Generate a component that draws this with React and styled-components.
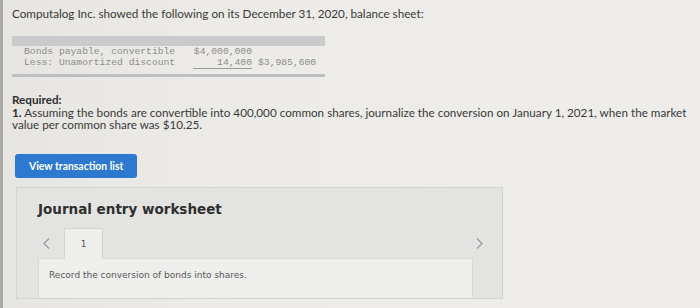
import styled, { createGlobalStyle } from 'styled-components';

const GlobalStyle = createGlobalStyle`
  html, body {
    margin: 0;
    padding: 0;
    background: #ebeae6;
  }
`;

const Page = styled.div`
  position: relative;
  min-height: 308px;
  box-sizing: border-box;
  padding: 5px 0 0 9px;
  border-left: 3px solid #a9a9a5;
  background: linear-gradient(90deg, #e6e5e1 0%, #ecebe7 30%, #eeede9 100%);
  font-family: Lato, "Open Sans", sans-serif;
  color: #3b3b3b;
  overflow: hidden;
`;

const Intro = styled.p`
  margin: 0;
  font-size: 11.7px;
  line-height: 16px;
  color: #3a3a3a;
`;

const Sheet = styled.div`
  width: 313px;
  margin-top: 15px;
  font-family: "Liberation Mono", "DejaVu Sans Mono", monospace;
  font-size: 9.7px;
  color: #8c8c8c;
`;

const SheetHead = styled.div`
  height: 10px;
  background: #c9cacc;
`;

const SheetRow = styled.div`
  display: grid;
  grid-template-columns: 169px 59px 6px 60px;
  padding-left: 12px;
  line-height: 11px;
  white-space: pre;
`;

const Amount = styled.span`
  text-align: right;
  border-bottom: ${(p) => (p.$under ? '1px solid #9a9a9a' : 'none')};
`;

const SheetRule = styled.div`
  height: 3px;
  margin-top: 5px;
  background: #bdbfc0;
`;

const Required = styled.div`
  margin-top: 16px;
  font-size: 11.7px;
  line-height: 12.7px;
  color: #3a3a3a;

  strong {
    font-weight: 700;
    color: #2e2e2e;
  }
`;

const Question = styled.p`
  margin: 0;
`;

const ListButton = styled.button`
  display: block;
  margin: 23px 0 0 3px;
  width: 122px;
  height: 24px;
  padding: 0 0 0 14px;
  border: none;
  border-radius: 3px;
  background: #2c79cf;
  color: #ffffff;
  font-family: Lato, "Open Sans", sans-serif;
  font-weight: 700;
  font-size: 10.4px;
  text-align: left;
  cursor: pointer;
`;

const Panel = styled.section`
  box-sizing: border-box;
  margin: 9px 0 0 4px;
  width: 487px;
  height: 112px;
  padding: 13px 12px 0 21px;
  display: flex;
  flex-direction: column;
  background: #e3e3e1;
  border: 1px solid #d3d3d1;
  font-family: "DejaVu Sans", Verdana, sans-serif;
`;

const PanelTitle = styled.h2`
  margin: 0;
  font-size: 13.5px;
  line-height: 16px;
  font-weight: 700;
  color: #2f2f2f;
`;

const NavRow = styled.div`
  display: flex;
  align-items: stretch;
  height: 30px;
  margin-top: 11px;
`;

const Arrow = styled.span`
  display: flex;
  align-items: center;
  width: ${(p) => p.$width}px;
  padding-left: ${(p) => p.$pad}px;
  box-sizing: border-box;
`;

const Spacer = styled.div`
  flex: 1;
`;

const Tab = styled.div`
  position: relative;
  z-index: 1;
  width: 39px;
  margin-bottom: -1px;
  display: flex;
  align-items: center;
  justify-content: center;
  box-sizing: border-box;
  background: #eeeeec;
  border: 1px solid #d4d4d2;
  border-bottom: none;
  font-size: 9px;
  color: #555;
`;

const Content = styled.div`
  flex: 1;
  margin-right: 17px;
  padding: 10px 0 0 10px;
  background: #eeeeec;
  border: 1px solid #d8d8d6;
  border-bottom: none;
  font-size: 9px;
  line-height: 12px;
  color: #575757;
`;

const Chevron = ({ dir }) => (
  <svg width="7" height="11" viewBox="0 0 7 11">
    <polyline
      points={dir === 'left' ? '6,0.5 1,5.5 6,10.5' : '1,0.5 6,5.5 1,10.5'}
      fill="none"
      stroke="#9a9a9a"
      strokeWidth="1.2"
    />
  </svg>
);

export default function App() {
  return (
    <>
      <GlobalStyle />
      <Page>
        <Intro>Computalog Inc. showed the following on its December 31, 2020, balance sheet:</Intro>
        <Sheet>
          <SheetHead />
          <SheetRow>
            <span>Bonds payable, convertible</span>
            <Amount>$4,000,000</Amount>
            <span />
            <span />
          </SheetRow>
          <SheetRow>
            <span>Less: Unamortized discount</span>
            <Amount $under>14,400</Amount>
            <span />
            <span>$3,985,600</span>
          </SheetRow>
          <SheetRule />
        </Sheet>
        <Required>
          <strong>Required:</strong>
          <Question>
            <strong>1.</strong> Assuming the bonds are convertible into 400,000 common shares, journalize the conversion on January 1, 2021, when the market
            <br />
            value per common share was $10.25.
          </Question>
        </Required>
        <ListButton>View transaction list</ListButton>
        <Panel>
          <PanelTitle>Journal entry worksheet</PanelTitle>
          <NavRow>
            <Arrow $width={26} $pad={5}>
              <Chevron dir="left" />
            </Arrow>
            <Tab>1</Tab>
            <Spacer />
            <Arrow $width={20} $pad={6}>
              <Chevron dir="right" />
            </Arrow>
          </NavRow>
          <Content>Record the conversion of bonds into shares.</Content>
        </Panel>
      </Page>
    </>
  );
}
